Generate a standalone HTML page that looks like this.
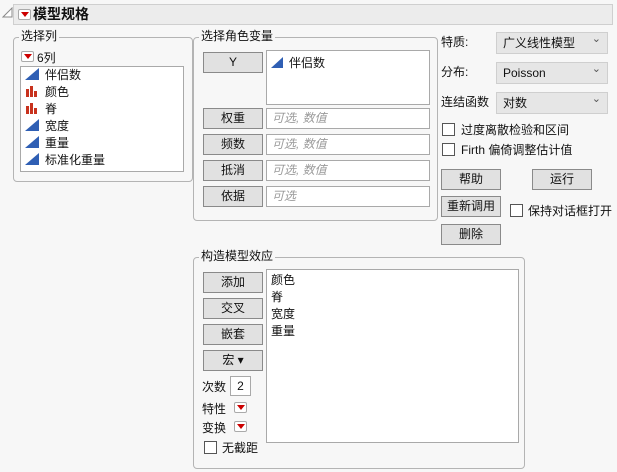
<!DOCTYPE html><html><head><meta charset="utf-8"><style>
*{margin:0;padding:0;box-sizing:border-box}
body{width:617px;height:472px;background:#f7f7f7;font-family:"Liberation Sans","Noto Sans CJK SC",sans-serif;font-size:12px;color:#111;position:relative;overflow:hidden}
.a{position:absolute}
.panel{position:absolute;border:1px solid #b4b4b4;border-radius:4px}
.lbl{position:absolute;background:#f7f7f7;padding:0 2px;line-height:14px}
.btn{position:absolute;width:60px;height:21px;background:#e1e1e1;border:1px solid #8a8a8a;text-align:center;line-height:19px;font-size:12px}
.box{position:absolute;background:#fff;border:1px solid #a9a9a9}
.ph{color:#9a9a9a;font-style:italic;padding-left:5px;line-height:18px}
.dd{position:absolute;width:112px;height:22px;background:#e6e6e6;border:1px solid #cfcfcf;line-height:20px;padding-left:6px;font-size:12px}
.dd:after{content:"⌄";position:absolute;right:6px;top:-4px;color:#555;font-size:11px}
.cb{position:absolute;width:13px;height:13px;background:#fff;border:1px solid #555}
svg.i{vertical-align:-1px;margin-right:6px}
.red{position:absolute;width:13px;height:11px;border:1px solid #aaa;border-radius:2px;background:#fff}
.red:after{content:"";position:absolute;left:2px;top:2px;border-left:4px solid transparent;border-right:4px solid transparent;border-top:5px solid #c00}
.li{line-height:17px;padding-left:4px;white-space:nowrap}
</style></head><body>
<svg class="a" style="left:2px;top:7px" width="11" height="11"><path d="M1 10 L10 1 L10 10 Z" fill="#fff" stroke="#888"/></svg>
<div class="a" style="left:13px;top:4px;width:600px;height:21px;background:#ececec;border:1px solid #cfcfcf"></div>
<div class="red" style="left:18px;top:9px"></div>
<div class="a" style="left:33px;top:5px;font-weight:bold;font-size:14px;line-height:18px">模型规格</div>

<div class="panel" style="left:13px;top:37px;width:180px;height:145px"></div>
<div class="lbl" style="left:19px;top:29px">选择列</div>
<div class="red" style="left:21px;top:51px"></div>
<div class="a" style="left:37px;top:51px;line-height:14px">6列</div>
<div class="box" style="left:20px;top:66px;width:164px;height:106px;padding-top:0px">
<div class="li"><svg class="i" width="14" height="12"><path d="M0 12L14 0V12Z" fill="#2f5fb4"/></svg>伴侣数</div>
<div class="li"><svg class="i" width="14" height="12"><path d="M1 4h3v8H1zM5 1h3v11H5zM9 6h3v6H9z" fill="#c8321e"/></svg>颜色</div>
<div class="li"><svg class="i" width="14" height="12"><path d="M1 4h3v8H1zM5 1h3v11H5zM9 6h3v6H9z" fill="#c8321e"/></svg>脊</div>
<div class="li"><svg class="i" width="14" height="12"><path d="M0 12L14 0V12Z" fill="#2f5fb4"/></svg>宽度</div>
<div class="li"><svg class="i" width="14" height="12"><path d="M0 12L14 0V12Z" fill="#2f5fb4"/></svg>重量</div>
<div class="li"><svg class="i" width="14" height="12"><path d="M0 12L14 0V12Z" fill="#2f5fb4"/></svg>标准化重量</div>
</div>

<div class="panel" style="left:193px;top:37px;width:245px;height:184px"></div>
<div class="lbl" style="left:199px;top:29px">选择角色变量</div>
<div class="btn" style="left:203px;top:52px">Y</div>
<div class="box" style="left:266px;top:50px;width:164px;height:55px;padding:3px 4px"><svg class="i" width="12" height="11"><path d="M0 11L12 0V11Z" fill="#2f5fb4"/></svg>伴侣数</div>
<div class="btn" style="left:203px;top:108px">权重</div><div class="box ph" style="left:266px;top:108px;width:164px;height:21px">可选, 数值</div>
<div class="btn" style="left:203px;top:134px">频数</div><div class="box ph" style="left:266px;top:134px;width:164px;height:21px">可选, 数值</div>
<div class="btn" style="left:203px;top:160px">抵消</div><div class="box ph" style="left:266px;top:160px;width:164px;height:21px">可选, 数值</div>
<div class="btn" style="left:203px;top:186px">依据</div><div class="box ph" style="left:266px;top:186px;width:164px;height:21px">可选</div>

<div class="a" style="left:441px;top:33px">特质:</div>
<div class="dd" style="left:496px;top:32px">广义线性模型</div>
<div class="a" style="left:441px;top:63px">分布:</div>
<div class="dd" style="left:496px;top:62px">Poisson</div>
<div class="a" style="left:441px;top:93px">连结函数</div>
<div class="dd" style="left:496px;top:92px">对数</div>
<div class="cb" style="left:442px;top:123px"></div><div class="a" style="left:461px;top:121px">过度离散检验和区间</div>
<div class="cb" style="left:442px;top:143px"></div><div class="a" style="left:461px;top:141px">Firth 偏倚调整估计值</div>
<div class="btn" style="left:441px;top:169px">帮助</div>
<div class="btn" style="left:532px;top:169px">运行</div>
<div class="btn" style="left:441px;top:196px">重新调用</div>
<div class="cb" style="left:510px;top:204px"></div><div class="a" style="left:528px;top:202px">保持对话框打开</div>
<div class="btn" style="left:441px;top:224px">删除</div>

<div class="panel" style="left:193px;top:257px;width:332px;height:212px"></div>
<div class="lbl" style="left:199px;top:249px">构造模型效应</div>
<div class="btn" style="left:203px;top:272px">添加</div>
<div class="btn" style="left:203px;top:298px">交叉</div>
<div class="btn" style="left:203px;top:324px">嵌套</div>
<div class="btn" style="left:203px;top:350px">宏 ▾</div>
<div class="box" style="left:266px;top:269px;width:253px;height:174px;padding-top:2px">
<div class="li">颜色</div><div class="li">脊</div><div class="li">宽度</div><div class="li">重量</div></div>
<div class="a" style="left:202px;top:378px">次数</div>
<div class="box" style="left:230px;top:376px;width:21px;height:20px;text-align:center;line-height:18px">2</div>
<div class="a" style="left:202px;top:400px">特性</div><div class="red" style="left:234px;top:402px"></div>
<div class="a" style="left:202px;top:419px">变换</div><div class="red" style="left:234px;top:421px"></div>
<div class="cb" style="left:204px;top:441px"></div><div class="a" style="left:222px;top:439px">无截距</div>
</body></html>
